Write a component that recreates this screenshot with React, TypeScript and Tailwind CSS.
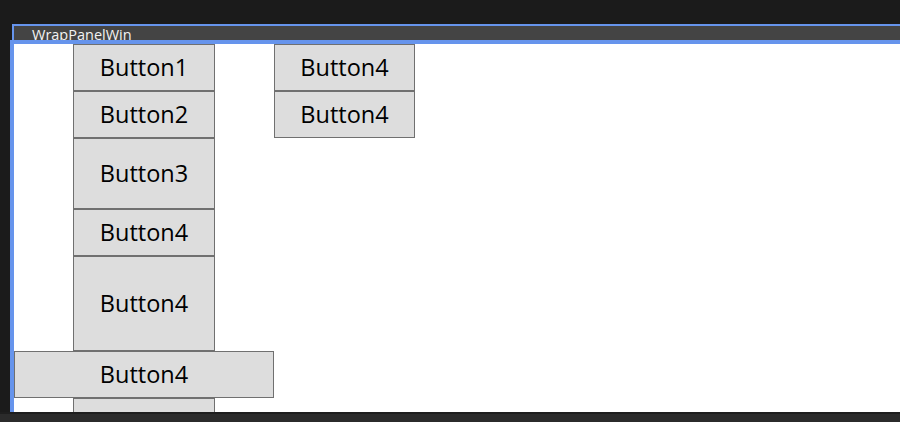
import React from 'react';

type Btn = { label: string; w: number; h: number };

const columnOne: Btn[] = [
    { label: 'Button1', w: 142, h: 47 },
    { label: 'Button2', w: 142, h: 47 },
    { label: 'Button3', w: 142, h: 71 },
    { label: 'Button4', w: 142, h: 47 },
    { label: 'Button4', w: 142, h: 95 },
    { label: 'Button4', w: 260, h: 47 },
    { label: 'Button4', w: 142, h: 47 },
];

const columnTwo: Btn[] = [
    { label: 'Button4', w: 141, h: 47 },
    { label: 'Button4', w: 141, h: 47 },
];

const WpfButton: React.FC<{ btn: Btn }> = ({ btn }) => (
    <div
        className="shrink-0 flex items-center justify-center border border-[#707070] bg-[#dddddd] text-[23.5px] text-black"
        style={{ width: btn.w, height: btn.h }}
    >
        {btn.label}
    </div>
);

const App: React.FC = () => {
    return (
        <div className="h-[422px] w-[900px] overflow-hidden bg-[#1b1b1b] flex flex-col pt-6 font-['Open_Sans','Noto_Sans',sans-serif]">
            {/* title bar */}
            <div className="ml-3 h-4 shrink-0 overflow-hidden border-t-2 border-l-2 border-[#6694ec] bg-[#444444] pl-[18px] text-[14.5px] leading-[17px] text-[#f2f2f2]">
                WrapPanelWin
            </div>

            {/* client area */}
            <div className="ml-[10px] flex-1 min-h-0 overflow-hidden border-t-4 border-l-4 border-[#6694ec] bg-white flex">
                <div className="w-[260px] shrink-0 flex flex-col items-center">
                    {columnOne.map((b, i) => <WpfButton key={i} btn={b} />)}
                </div>
                <div className="flex flex-col">
                    {columnTwo.map((b, i) => <WpfButton key={i} btn={b} />)}
                </div>
            </div>

            <div className="h-[10px] shrink-0 border-t-2 border-[#1e1e1e] bg-[#2b2b2b]" />
        </div>
    );
};

export default App;
